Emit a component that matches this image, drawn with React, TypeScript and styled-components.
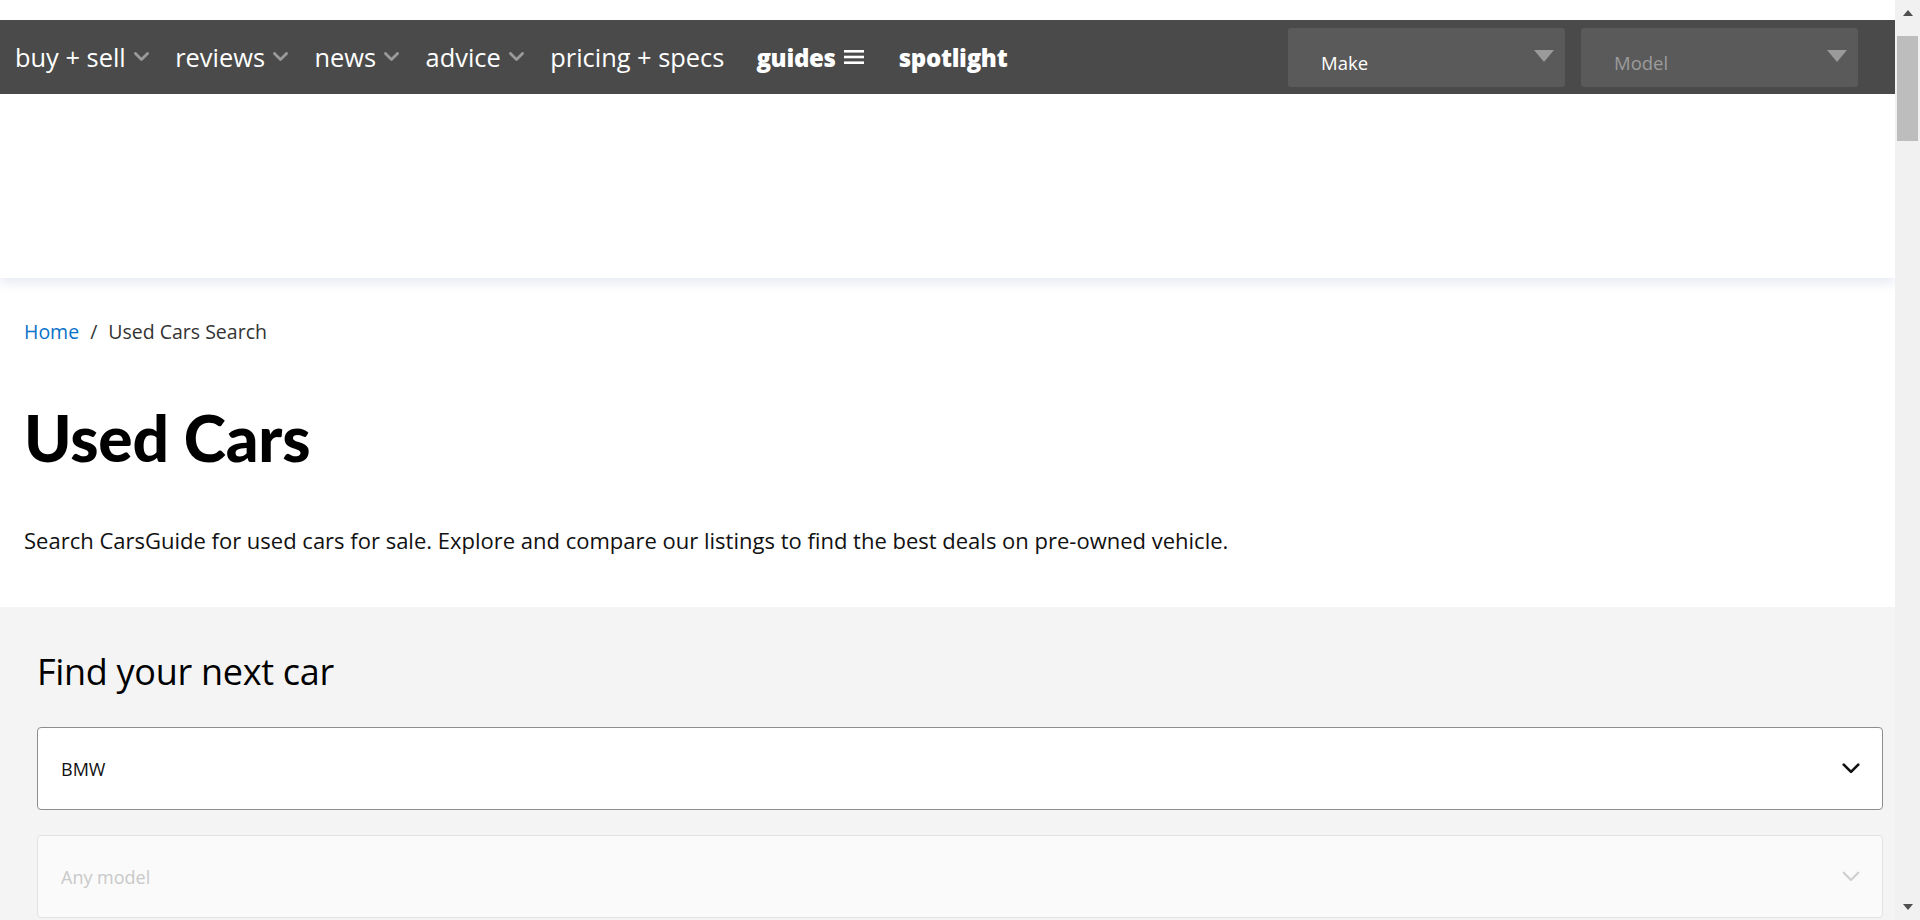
import styled, { createGlobalStyle } from "styled-components";

const GlobalStyle = createGlobalStyle`
  html, body {
    margin: 0;
    padding: 0;
    background: #fff;
    font-family: "Open Sans", "Liberation Sans", sans-serif;
    color: #000;
    overflow: hidden;
  }
  * { box-sizing: border-box; }
`;

const Page = styled.div`
  margin-right: 25px;
  height: 100vh;
  overflow: hidden;
`;

const TopStrip = styled.div`
  height: 20px;
  background: #fff;
`;

const NavBar = styled.nav`
  height: 74px;
  background: #4a4a4a;
  display: flex;
  align-items: center;
  padding: 0 37px 0 15px;
`;

const NavItem = styled.a<{ $bold?: boolean; $space?: number }>`
  display: flex;
  align-items: center;
  gap: 8px;
  margin-right: ${(p) => p.$space ?? 26.5}px;
  color: #fff;
  font-size: ${(p) => (p.$bold ? 24 : 25.4)}px;
  font-weight: ${(p) => (p.$bold ? 800 : 400)};
  letter-spacing: ${(p) => (p.$bold ? "-0.3px" : "0")};
  text-decoration: none;
  white-space: nowrap;
  cursor: pointer;
`;

const Selects = styled.div`
  margin-left: auto;
  display: flex;
  gap: 16px;
`;

const NavSelect = styled.div<{ $muted?: boolean }>`
  width: 277px;
  height: 59px;
  margin-top: 1px;
  background: #5a5a5a;
  border-radius: 3px;
  display: flex;
  align-items: center;
  justify-content: space-between;
  padding: 10px 11px 0 33px;
  color: ${(p) => (p.$muted ? "#9c9c9c" : "#fff")};
  font-size: 18.5px;
`;

const Triangle = styled.span`
  width: 0;
  height: 0;
  margin-top: -14px;
  border-left: 10px solid transparent;
  border-right: 10px solid transparent;
  border-top: 12px solid #9a9a9a;
`;

const AdArea = styled.div`
  height: 184px;
  background: #fff;
  box-shadow: 0 5px 10px rgba(60, 80, 160, 0.12);
  position: relative;
`;

const Intro = styled.section`
  padding: 0 24px;
`;

const Crumbs = styled.div`
  margin-top: 40px;
  font-size: 19.5px;
  color: #333;
  display: flex;
  gap: 11px;
  line-height: 28px;
`;

const CrumbLink = styled.a`
  color: #0b72c8;
  text-decoration: none;
`;

const Heading = styled.h1`
  margin: 52px 0 0;
  font-family: Lato, "Open Sans", sans-serif;
  font-weight: 900;
  font-size: 64px;
  line-height: 80px;
  letter-spacing: -0.2px;
`;

const Lead = styled.p`
  margin: 47px 0 0;
  padding-bottom: 52px;
  font-size: 22px;
  line-height: 30px;
  color: #111;
`;

const Finder = styled.section`
  background: #f4f4f4;
  padding: 40px 12px 0 37px;
  min-height: 400px;
`;

const FinderTitle = styled.h2`
  margin: 0 0 30px;
  font-size: 36px;
  font-weight: 400;
  line-height: 50px;
  letter-spacing: -0.3px;
`;

const Field = styled.div<{ $disabled?: boolean }>`
  height: 83px;
  margin-bottom: 25px;
  border: 1px solid ${(p) => (p.$disabled ? "#e2e2e2" : "#8e8e8e")};
  border-radius: 4px;
  background: ${(p) => (p.$disabled ? "#fafafa" : "#fff")};
  color: ${(p) => (p.$disabled ? "#c9c9c9" : "#111")};
  display: flex;
  align-items: center;
  justify-content: space-between;
  padding: 0 22px 0 23px;
  font-size: 18px;
`;

const Scrollbar = styled.div`
  position: fixed;
  top: 0;
  right: 0;
  width: 25px;
  height: 100vh;
  background: #f1f1f1;
  display: flex;
  flex-direction: column;
  align-items: center;
  padding-top: 10px;
`;

const Arrow = styled.span<{ $down?: boolean }>`
  width: 0;
  height: 0;
  border-left: 5.5px solid transparent;
  border-right: 5.5px solid transparent;
  ${(p) =>
    p.$down
      ? "border-top: 6px solid #505050; margin-top: auto; margin-bottom: 10px;"
      : "border-bottom: 6px solid #505050;"}
`;

const Thumb = styled.div`
  width: 21px;
  height: 105px;
  margin-top: 20px;
  background: #bdbdbd;
`;

const Chevron = ({ color, w, sw }: { color: string; w: number; sw: number }) => (
  <svg width={w} height={w * 0.62} viewBox="0 0 16 10" fill="none">
    <polyline
      points="1.5,1.5 8,8 14.5,1.5"
      stroke={color}
      strokeWidth={sw}
      strokeLinecap="round"
      strokeLinejoin="round"
    />
  </svg>
);

const Burger = () => (
  <svg width="20" height="16" viewBox="0 0 20 16">
    <rect x="0" y="1" width="20" height="2.6" fill="#fff" />
    <rect x="0" y="6.7" width="20" height="2.6" fill="#fff" />
    <rect x="0" y="12.4" width="20" height="2.6" fill="#fff" />
  </svg>
);

const menu = ["buy + sell", "reviews", "news", "advice"];

export default function App() {
  return (
    <>
      <GlobalStyle />
      <Page>
        <TopStrip />
        <NavBar>
          {menu.map((m) => (
            <NavItem key={m}>
              {m}
              <Chevron color="#9a9a9a" w={15} sw={3} />
            </NavItem>
          ))}
          <NavItem $space={32}>pricing + specs</NavItem>
          <NavItem $bold $space={35}>
            guides
            <Burger />
          </NavItem>
          <NavItem $bold>spotlight</NavItem>
          <Selects>
            <NavSelect>
              Make
              <Triangle />
            </NavSelect>
            <NavSelect $muted>
              Model
              <Triangle />
            </NavSelect>
          </Selects>
        </NavBar>
        <AdArea />
        <Intro>
          <Crumbs>
            <CrumbLink>Home</CrumbLink>
            <span>/</span>
            <span>Used Cars Search</span>
          </Crumbs>
          <Heading>Used Cars</Heading>
          <Lead>
            Search CarsGuide for used cars for sale. Explore and compare our listings to find the
            best deals on pre-owned vehicle.
          </Lead>
        </Intro>
        <Finder>
          <FinderTitle>Find your next car</FinderTitle>
          <Field>
            BMW
            <Chevron color="#111" w={18} sw={2.4} />
          </Field>
          <Field $disabled>
            Any model
            <Chevron color="#cfcfcf" w={18} sw={2} />
          </Field>
        </Finder>
      </Page>
      <Scrollbar>
        <Arrow />
        <Thumb />
        <Arrow $down />
      </Scrollbar>
    </>
  );
}
